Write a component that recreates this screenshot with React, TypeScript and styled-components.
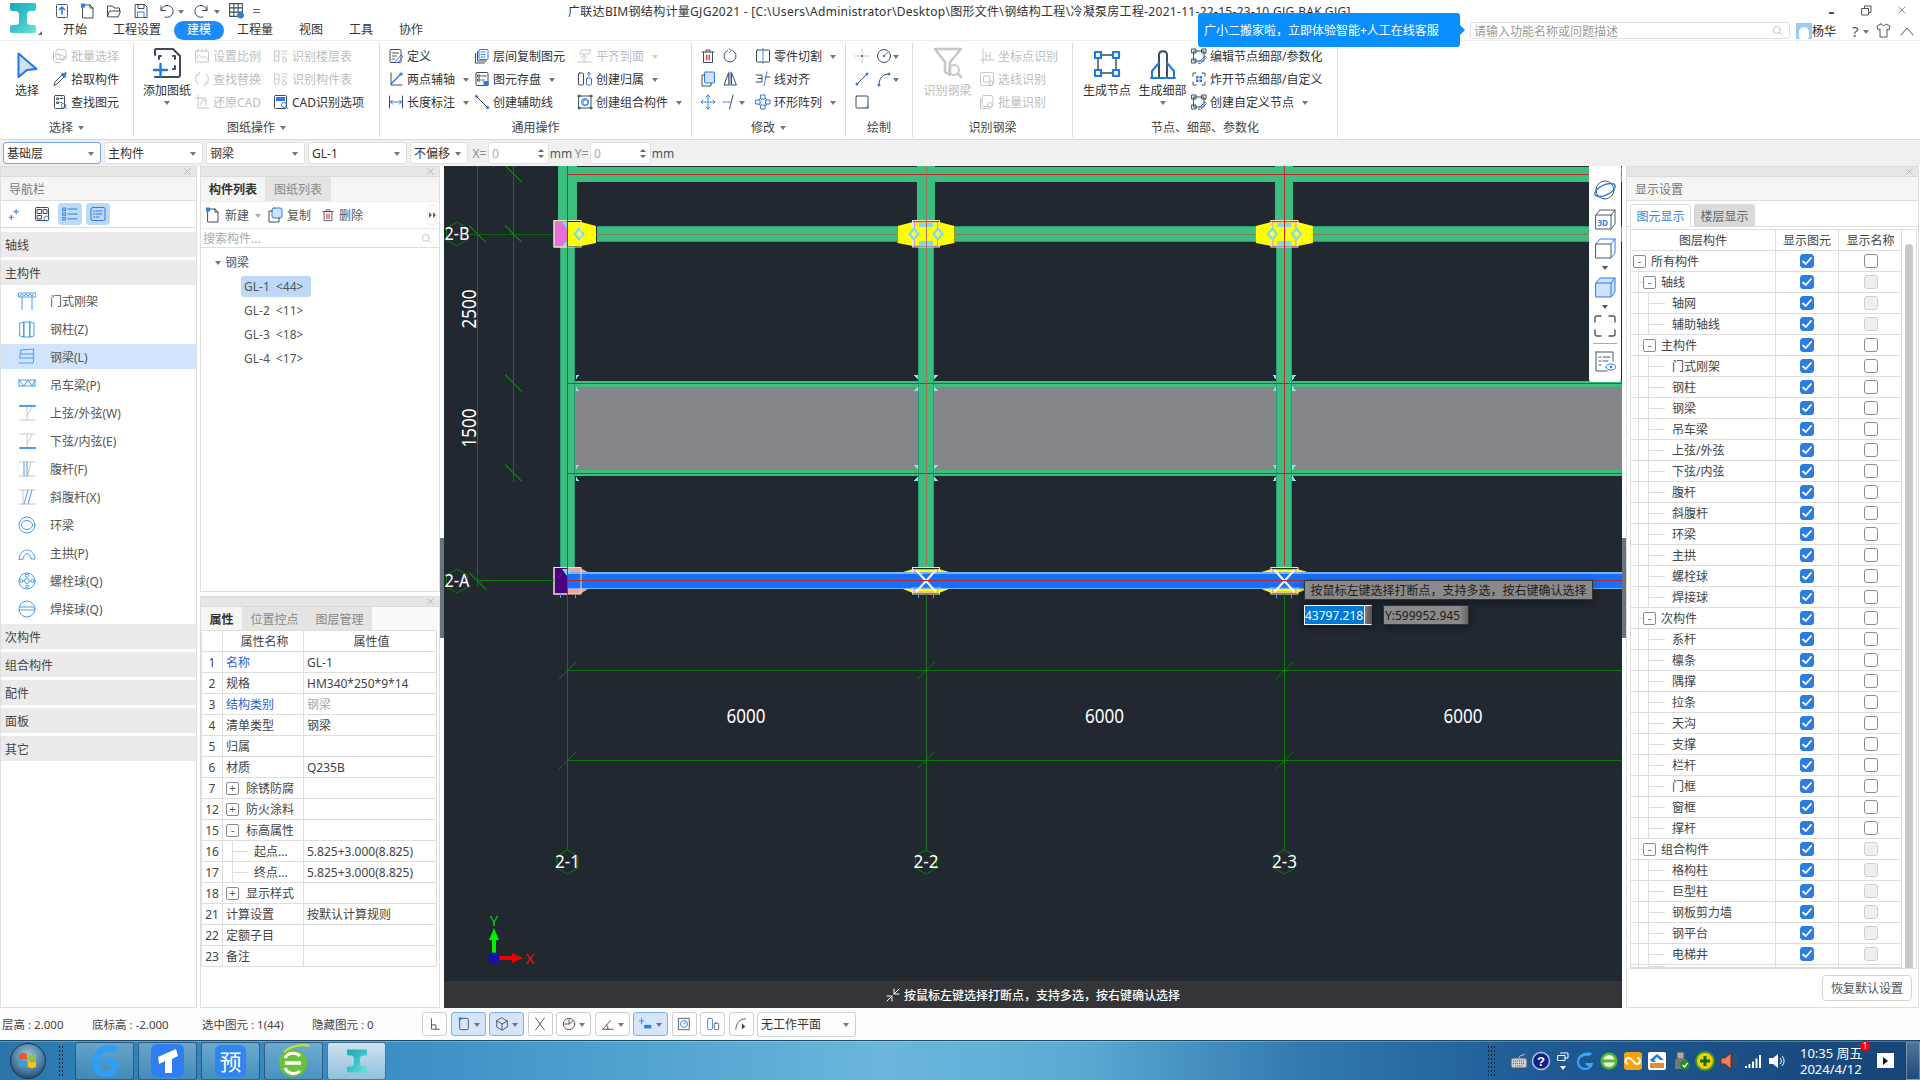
import React from 'react';
import styled, { createGlobalStyle } from 'styled-components';

const Global = createGlobalStyle`
  html, body { margin: 0; padding: 0; width: 1920px; height: 1080px; overflow: hidden; background: #fff; }
  #root { width: 1920px; height: 1080px; }
  * { box-sizing: border-box; }
  body { font-family: "Noto Sans", "Noto Sans CJK SC", sans-serif; font-size: 12px; color: #444; }
`;

/* ---------- icons ---------- */
const Svg = styled.svg<{ $s: number; $c?: string; $a?: string }>`
  width: ${p => p.$s}px; height: ${p => p.$s}px; flex: none; fill: none;
  stroke: ${p => p.$c || '#3f4b5b'}; stroke-width: 1; stroke-linecap: round; stroke-linejoin: round;
  --a: ${p => p.$a || '#2b7ce9'};
  .a { stroke: var(--a); }
  .f { fill: var(--a); stroke: none; }
  .l { fill: #cfe2fa; stroke: var(--a); }
  .r { stroke: #e02020; }
  .n { fill: currentColor; stroke: none; }
`;

const G: Record<string, React.ReactNode> = {
  upload: <><rect x="2.5" y="1.5" width="11" height="13" rx="1" strokeDasharray="2 1" /><path className="a" strokeWidth="1.6" d="M8 11V4M5.5 6.5L8 4l2.5 2.5" /></>,
  newDoc: <><path d="M3 2h7l3 3v10H3zM10 2v3h3" /><rect className="f" x="1" y="0.5" width="4" height="4" /></>,
  open: <path d="M1.5 13.5V3h5l1.5 2h5.5v3M1.5 13.5l2-5.5h11l-2 5.5z" />,
  save: <><path d="M2.5 1.5h9l2.5 2.5v10.500H2.500zM5 1.5v4h6v-4" /><rect className="a" x="5" y="9" width="6" height="5.5" /></>,
  undo: <path d="M3 3v4.5h4.5M3.2 7.5A6 6 0 1 1 7 14" />,
  redo: <path d="M13 3v4.5H8.5M12.8 7.5A6 6 0 1 0 9 14" />,
  gridEye: <><path d="M1.5 1.5h12v12h-12zM1.5 5.5h12M1.5 9.5h12M5.5 1.5v12M9.5 1.5v12" /><circle className="f" cx="12" cy="12.5" r="3" /></>,
  batch: <><rect x="4" y="1.5" width="10" height="10" rx="2" /><path d="M1.5 4v8l2 2.5h5" /><path d="M6 6l4 7 1-3 3-.5z" /></>,
  pick: <><path d="M2 14l1-3 7-7 2 2-7 7z" /><path className="f" d="M9 3l1.5-1.5 1 1 2-1.5 1.500 1.500-1.500 2 1 1L13 7z" /></>,
  docFind: <><rect x="2.5" y="1.5" width="10" height="13" rx="1" /><path d="M5 4h1.5v1.5H5zM8 4.5h3M5 8h1.5v1.5H5zM8 8.5h1.5" /><circle className="a" cx="11.5" cy="11.5" r="2.2" /><path className="a" d="M13 13l1.5 1.5" /></>,
  scale: <><rect x="1.5" y="3" width="13" height="11" rx="1" /><path d="M1.5 11l4-4 3 3 2-2 4 4M4 1v2M8 1v2M12 1v2" /></>,
  swap: <><path d="M3 4a6 6 0 0 0 1 9M13 12a6 6 0 0 0-1-9" /><path d="M5 1v3H2M11 15v-3h3" /></>,
  restore: <><path d="M4 1v13h11M1 4h11v7" /><path d="M6 11l3-6 2 2" /></>,
  tblDots: <><path d="M2 3h4v10H2zM2 8h4M9 3h5M9 6h5M9 9h3" /><circle cx="11.5" cy="12" r="2" /></>,
  cad: <><rect x="1.5" y="1.5" width="12" height="13" rx="1" /><rect className="f" x="3" y="3" width="9" height="4" /><circle className="a" cx="11" cy="11" r="2.5" /><path className="a" d="M13 13l2 2" /></>,
  define: <><rect x="2" y="1.5" width="11" height="13" rx="1" /><path d="M4.5 5h6M4.5 8h4M4.5 11h2" /><path className="a" d="M8 13l5-6 2 1.5-5 6H8z" /></>,
  twoPt: <><path d="M3 2v12h11" /><path className="a" strokeWidth="1.5" d="M3 13L13 3" /><circle className="a" cx="13" cy="3" r="1.2" /></>,
  dim: <><path d="M1.5 2v12M14.5 2v12" /><path className="a" d="M2.5 8h11M4.5 6l-2 2 2 2M11.5 6l2 2-2 2" /></>,
  floor: <><rect className="a" x="5" y="1.5" width="9" height="10" rx="1" /><path className="a" strokeDasharray="1.5 1" d="M7 4h5M7 6.5h5M7 9h5" /><path d="M3.5 3.5v9.500h9M1.500 5.500v9.500h9" /></>,
  elemSave: <><rect x="2" y="1.5" width="12" height="13" rx="1" /><path d="M4 4h2v2H4zM8 5h4M4 8h2v2H4zM8 9h2" /><rect className="f" x="9.5" y="10" width="5" height="5" /></>,
  auxLine: <><path d="M2 2l12 12" /><circle className="a" cx="2.5" cy="2.5" r="1.2" /><circle className="a" cx="13.5" cy="13.5" r="1.2" /></>,
  flush: <path d="M5 2h9l-2 4H3zM1 14h14M7 14V7l-3 3M7 7l3 3" />,
  owner: <><rect x="1.5" y="2" width="5" height="12" rx="1" /><rect className="a" x="9.5" y="7" width="5" height="7" rx="1" /><path className="a" d="M12 5V1.5M10.5 3L12 1.5 13.5 3" /></>,
  combo: <><path d="M2 2h12v12H2z" /><circle cx="2" cy="2" r="1" /><circle cx="14" cy="2" r="1" /><circle cx="2" cy="14" r="1" /><circle cx="14" cy="14" r="1" /><circle className="a" cx="8" cy="8" r="3.5" /><rect className="a" x="6" y="6" width="5" height="5" rx="1" /></>,
  trash: <><path d="M2 4h12M6 4V2h4v2M3.5 4v10.500h9V4" /><path className="r" strokeWidth="1.2" d="M6.8 7v5M9.2 7v5" /></>,
  rotate: <><path d="M10.5 2.5A6 6 0 1 1 5.5 2.5" /><path className="a" d="M7 .8L9.5 2.5 7.5 4.5" /></>,
  cut: <><rect x="1.5" y="2" width="13" height="12" rx="1" /><path className="a" strokeDasharray="2 1.2" d="M8 0.5v15" /></>,
  copyB: <><rect className="l" x="4.5" y="1" width="10" height="11" rx="1" /><path d="M4.5 4H2v11h9v-3" /></>,
  mirror: <><path d="M6.5 2L2 14h4.500zM9.500 2v12H14z" /><path className="a" d="M8 1v14" /></>,
  align: <><path d="M1 4h6v7H1M10 6h5M3 7.5h4" /><path className="a" d="M12 1l-3 14" strokeDasharray="2 1" /></>,
  move: <path className="a" d="M8 1v14M1 8h14M6 3l2-2 2 2M6 13l2 2 2-2M3 6L1 8l2 2M13 6l2 2-2 2" strokeDasharray="2 1" />,
  trim: <><path className="a" strokeDasharray="2.5 1.5" d="M1 8h7" /><path d="M11 1L7.5 15" /></>,
  ring: <><circle cx="8" cy="8" r="4.5" /><rect className="a" fill="#fff" x="6" y="1" width="4" height="4" /><rect className="a" fill="#fff" x="1" y="6" width="4" height="4" /><rect className="a" fill="#fff" x="11" y="6" width="4" height="4" /><rect className="a" fill="#fff" x="6" y="11" width="4" height="4" /></>,
  point: <><path d="M1 8h4.500M10.500 8H15M8 1v4.500M8 10.500V15" /><circle cx="8" cy="8" r="1" className="n" /></>,
  circ: <><circle cx="8" cy="8" r="6.5" /><path className="a" d="M8 8l3.500-3.500" /><circle className="f" cx="8" cy="8" r="1.2" /></>,
  line: <><path d="M3 13L13 3" /><circle className="f" cx="3" cy="13" r="1.5" /><circle className="f" cx="13" cy="3" r="1.5" /></>,
  arc: <><path d="M3 14C3 7 7 3 13 3" /><circle className="f" cx="3" cy="14" r="1.5" /><circle className="f" cx="13" cy="3" r="1.5" /></>,
  rect: <><rect x="2" y="2" width="12" height="12" rx="1" /><circle className="f" cx="13.5" cy="13.5" r="1.3" /></>,
  coord: <path d="M4 1v14M1 12h14M7 4v8M11 4v8M7 8h4" />,
  lineRec: <><rect x="1.5" y="1.5" width="13" height="13" rx="2" /><rect x="5" y="5" width="6" height="6" /><circle cx="12" cy="12" r="2" /></>,
  batchRec: <><rect x="3" y="1.5" width="11" height="11" rx="2" /><path d="M1.5 5v9.500h9" /><circle cx="11" cy="11" r="2.5" /></>,
  editNode: <><path d="M3 3h10v10H3z" /><rect x="1" y="1" width="4" height="4" /><rect x="11" y="1" width="4" height="4" /><rect x="1" y="11" width="4" height="4" /><path className="a" d="M8 14l6-6 1.500 1.500-6 6H8z" /></>,
  explode: <><path d="M2 5V2h3M11 2h3v3M14 11v3h-3M5 14H2v-3" /><rect className="f" x="5" y="5" width="2.5" height="2.5" /><rect className="f" x="8.5" y="5" width="2.5" height="2.5" /><rect className="f" x="5" y="8.5" width="2.5" height="2.5" /><rect className="f" x="8.5" y="8.5" width="2.5" height="2.5" /></>,
  search: <><circle cx="7" cy="7" r="5" /><path d="M11 11l3.500 3.500" /></>,
  x: <path d="M3 3l10 10M13 3L3 13" />,
  copySm: <><rect className="l" x="5" y="1" width="10" height="10" rx="2" /><path d="M5 4H2v11h10v-4" /></>,
  sparkle: <path className="a" strokeWidth="1.3" d="M10 1.5v6M7 4.5h6M4 9v5M1.500 11.500h5" />,
  gridGear: <><rect x="1.5" y="1.5" width="13" height="13" rx="1" /><rect x="3.5" y="3.5" width="4" height="4" /><rect x="9.5" y="3.5" width="3.5" height="4" /><rect x="3.5" y="9.5" width="4" height="3.5" /><circle className="a" cx="12.5" cy="12.5" r="2.5" /></>,
  listDots: <g className="a"><rect x="1" y="2" width="2.5" height="2.5" /><rect x="1" y="6.8" width="2.5" height="2.5" /><rect x="1" y="11.5" width="2.5" height="2.5" /><path d="M6 3h9M6 8h9M6 12.800h9" /></g>,
  form: <g className="a"><rect x="1" y="1.5" width="14" height="13" rx="1.5" /><path d="M3.500 5h1M6 5h6M3.500 8h1M6 8h6M3.500 11h1M6 11h3" /></g>,
  ell: <path d="M4 2v12h9M4 9h5v5" />,
  rectSt: <><rect x="3" y="1.5" width="10" height="13" rx="1.5" /><rect className="f" x="2" y="0.5" width="3" height="3" /></>,
  cubeSt: <path d="M8 1l6 3.500v7L8 15l-6-3.500v-7zM8 8v7M2 4.500L8 8l6-3.500" />,
  xSt: <path d="M3 1l10 14M13 1L3 15" />,
  clock: <><circle cx="8" cy="8" r="6.5" /><path d="M8 3v5H2.500M8 8l4-3" /></>,
  angle: <path d="M2 14h12M2 14L11 4M8 14A6 6 0 0 0 6.500 9" />,
  plusBar: <><path d="M3 1.5v6M0.500 4.500h5" className="a" /><rect className="f" x="6" y="9" width="8" height="4" /></>,
  frame: <><rect x="2" y="1.5" width="12" height="13" /><circle className="a" cx="8" cy="8" r="4" /><path className="a" d="M8 8l2-3" /></>,
  barSt: <><rect className="a" x="2" y="1.5" width="5.5" height="13" rx="1.5" /><rect x="9.5" y="7" width="5" height="7.5" rx="1.5" /></>,
  elbow: <><path d="M2 14C3 6 6 3 13 2" /><path d="M9 14V7l4 4z" className="n" /></>,
};

const Icon = ({ n, s = 16, off, c, a }: { n: string; s?: number; off?: boolean; c?: string; a?: string }) => (
  <Svg viewBox="0 0 16 16" $s={s} $c={off ? '#c6c6c6' : c} $a={off ? '#c6c6c6' : a}>{G[n]}</Svg>
);

const Caret = styled.span<{ $ml?: number; $d?: string }>`
  flex: none; display: inline-block; width: 0; height: 0; margin-left: ${p => p.$ml ?? 5}px; margin-top: 2px;
  border: 3px solid transparent; border-bottom: 0; border-top: 4px solid ${p => p.$d || '#777'};
`;

const LogoGlyph = ({ w = 26, h = 30 }: { w?: number; h?: number }) => (
  <svg viewBox="0 0 26 30" width={w} height={h}>
    <defs>
      <linearGradient id="lg" x1="0" y1="0" x2="1" y2="1">
        <stop offset="0" stopColor="#1fa5b3" /><stop offset="0.5" stopColor="#37c4c8" /><stop offset="1" stopColor="#6fe3d6" />
      </linearGradient>
    </defs>
    <path fill="url(#lg)" d="M1 0h24c1 0 1 1 1 2v4c0 1-1 2-2 2h-3c-3 0-4 2-4 4v7c0 2 1 3 4 3h3c1 0 2 1 2 2v4c0 1-1 2-2 2H2c-1 0-2-1-2-2v-4c0-1 1-2 2-2h3c3 0 4-1 4-3v-7c0-2-1-4-4-4H2C1 8 0 7 0 6V2c0-1 0-2 1-2z" />
  </svg>
);

/* ---------- layout ---------- */
const Page = styled.div`
  width: 1920px; height: 1080px; display: flex; flex-direction: column; background: #fff; position: relative;
`;
const Header = styled.header`
  height: 41px; display: flex; border-bottom: 1px solid #eee; position: relative; flex: none;
`;
const LogoCol = styled.div`
  width: 50px; padding: 3px 0 0 10px; position: relative; flex: none;
`;
const LogoMark = styled.span`
  position: absolute; left: 38px; top: 31px; width: 0; height: 0;
  border-left: 4px solid transparent; border-bottom: 4px solid #666;
`;
const HeaderMain = styled.div`
  flex: 1; display: flex; flex-direction: column; min-width: 0;
`;
const TitleRow = styled.div`
  height: 21px; display: flex; align-items: center; flex: none;
`;
const Quick = styled.div`
  width: 518px; display: flex; align-items: center; padding-left: 4px; flex: none;
`;
const QuickBtn = styled.span<{ $w: number }>`
  width: ${p => p.$w}px; display: flex; align-items: center; flex: none;
`;
const MoreMark = styled.span`
  width: 7px; height: 4px; border-top: 1px solid #666; border-bottom: 1px solid #666; margin-left: 1px;
`;
const Title = styled.div`
  color: #333; white-space: nowrap; font-size: 12px; letter-spacing: .3px;
`;
const WinCtl = styled.div`
  position: absolute; right: 0; top: 2px; display: flex; align-items: center;
`;
const WinBtn = styled.span<{ $w: number }>`
  width: ${p => p.$w}px; display: flex; justify-content: center; align-items: center; height: 16px;
`;
const MinBar = styled.span`
  width: 5px; height: 2px; background: #555; margin-top: 5px;
`;
const TabRow = styled.nav`
  height: 19px; display: flex; align-items: center;
`;
const Tab = styled.span<{ $on?: boolean }>`
  padding: 0 13px; height: 19px; line-height: 18px; border-radius: 10px; font-size: 12px;
  color: ${p => (p.$on ? '#fff' : '#333')}; background: ${p => (p.$on ? '#1a8cff' : 'transparent')};
`;
const HeadRight = styled.div`
  margin-left: auto; display: flex; align-items: center; height: 19px;
`;
const SearchBox = styled.div`
  width: 320px; height: 17px; border: 1px solid #e2e2e2; border-radius: 3px; display: flex; align-items: center;
  justify-content: space-between; padding: 0 6px 0 3px; color: #9a9a9a; font-size: 12px; background: #fff;
`;
const Avatar = styled.span`
  width: 16px; height: 16px; margin-left: 6px; background: #9ccbf8; display: flex; align-items: flex-end; justify-content: center; flex: none;
`;
const AvatarHead = styled.span`
  width: 10px; height: 12px; background: #fff; border-radius: 5px 5px 2px 2px;
`;
const UserName = styled.span`
  color: #222; width: 40px; flex: none;
`;
const HelpMark = styled.span`
  color: #555; font-size: 15px; width: 10px; line-height: 16px; flex: none;
`;
const HeadIcon = styled.span<{ $ml: number; $mr?: number }>`
  margin-left: ${p => p.$ml}px; margin-right: ${p => p.$mr ?? 0}px; display: flex; flex: none;
`;
const Banner = styled.div`
  position: absolute; left: 1198px; top: 13px; width: 262px; height: 34px; background: #0a8fff; color: #fff;
  border-radius: 3px; display: flex; align-items: center; padding-left: 6px; font-size: 12px; white-space: nowrap; z-index: 3;
  &::after {
    content: ''; position: absolute; right: -5px; top: 12px; border-left: 5px solid #0a8fff;
    border-top: 5px solid transparent; border-bottom: 5px solid transparent;
  }
`;

const Ribbon = styled.div`
  height: 99px; display: flex; border-bottom: 1px solid #dadada; flex: none; background: #fff;
`;
const Group = styled.section<{ $w: number }>`
  width: ${p => p.$w}px; height: 94px; margin-top: 2px; border-right: 1px solid #dcdcdc; display: flex; flex-direction: column; flex: none;
`;
const GroupBody = styled.div<{ $pl?: number }>`
  flex: 1; display: flex; padding-left: ${p => p.$pl ?? 0}px; padding-top: 1px; min-height: 0;
`;
const GroupLabel = styled.div`
  height: 17px; display: flex; align-items: center; justify-content: center; color: #444; font-size: 12px; margin-bottom: 2px;
`;
const Big = styled.div<{ $w: number; $off?: boolean }>`
  width: ${p => p.$w}px; display: flex; flex-direction: column; align-items: center; flex: none;
  color: ${p => (p.$off ? '#bcbcbc' : '#333')}; white-space: nowrap;
`;
const BigIcon = styled.div`
  height: 35px; display: flex; align-items: flex-end; justify-content: center; width: 100%;
`;
const BigText = styled.div`
  margin-top: 4px; line-height: 16px; font-size: 12px;
`;
const Col = styled.div<{ $w?: number }>`
  width: ${p => (p.$w ? `${p.$w}px` : 'auto')}; display: flex; flex-direction: column; flex: none;
`;
const Row = styled.div<{ $off?: boolean; $gap?: number }>`
  height: 23px; display: flex; align-items: center; gap: ${p => p.$gap ?? 3}px; white-space: nowrap;
  color: ${p => (p.$off ? '#bdbdbd' : '#333')}; font-size: 12px;
`;

const Item = ({ i, t, off, caret }: { i: string; t: string; off?: boolean; caret?: boolean }) => (
  <Row $off={off}><Icon n={i} off={off} /><span>{t}</span>{caret && <Caret $d={off ? '#ccc' : '#777'} />}</Row>
);

const OptionBar = styled.div`
  height: 26px; background: #f0f0f0; display: flex; align-items: center; gap: 3px; padding-left: 3px; flex: none;
`;
const Select = styled.div<{ $w: number; $on?: boolean }>`
  width: ${p => p.$w}px; height: 22px; background: #fff; border: 1px solid ${p => (p.$on ? '#7aa7e6' : '#e0e0e0')}; border-radius: 3px;
  display: flex; align-items: center; justify-content: space-between; padding: 0 6px 0 3px; color: #333;
`;
const SpinGroup = styled.div`
  display: flex; align-items: center;
`;
const OptLabel = styled.span<{ $dim?: boolean; $w: number }>`
  width: ${p => p.$w}px; flex: none; color: ${p => (p.$dim ? '#8a8a8a' : '#555')}; white-space: nowrap; text-align: center;
`;
const Spin = styled.div`
  width: 61px; height: 22px; background: #fff; border: 1px solid #e0e0e0; border-radius: 3px; display: flex; align-items: center;
  justify-content: space-between; padding: 0 4px 0 3px; color: #aaa; flex: none;
`;
const SpinArrows = styled.span`
  display: flex; flex-direction: column; gap: 3px;
`;
const ArrowUp = styled.span`
  border: 3px solid transparent; border-top: 0; border-bottom: 3px solid #666; width: 0; height: 0;
`;
const ArrowDown = styled.span`
  border: 3px solid transparent; border-bottom: 0; border-top: 3px solid #666; width: 0; height: 0;
`;

const Main = styled.main`
  height: 842px; display: flex; position: relative; flex: none;
`;
const Panel = styled.section<{ $w?: number; $ml?: number; $h?: number }>`
  width: ${p => (p.$w ? `${p.$w}px` : '100%')}; margin-left: ${p => p.$ml ?? 0}px;
  ${p => (p.$h ? `height:${p.$h}px;` : '')}
  flex: ${p => (p.$h || p.$w ? 'none' : '1')};
  border: 1px solid #dedede; display: flex; flex-direction: column; background: #fff; min-height: 0;
`;
const Grip = styled.div`
  height: 10px; background: #e6e6e6; border-bottom: 1px solid #dadada; display: flex; justify-content: flex-end; align-items: center; padding-right: 4px; flex: none;
`;
const PanelHead = styled.div`
  height: 24px; background: #f5f5f5; border-bottom: 1px solid #dedede; display: flex; align-items: center; padding-left: 8px; color: #777; flex: none;
`;
const NavTools = styled.div`
  height: 27px; display: flex; align-items: center; gap: 4px; padding-left: 1px; border-bottom: 1px solid #dedede; flex: none;
`;
const NavTool = styled.span<{ $on?: boolean }>`
  width: 24px; height: 22px; border-radius: 4px; display: flex; align-items: center; justify-content: center;
  background: ${p => (p.$on ? '#bcd9f5' : 'transparent')};
`;
const NavList = styled.div`
  padding-top: 4px; display: flex; flex-direction: column; gap: 3px;
`;
const NavSection = styled.div`
  height: 25px; background: #ebebeb; padding-left: 4px; display: flex; align-items: center; color: #444; font-size: 12px; flex: none;
`;
const NavItem = styled.div<{ $on?: boolean }>`
  height: 25px; display: flex; align-items: center; gap: 14px; padding-left: 17px; color: #555; flex: none;
  background: ${p => (p.$on ? '#d0e5fd' : 'transparent')};
`;

const Middle = styled.div`
  width: 240px; margin-left: 3px; display: flex; flex-direction: column; gap: 4px; flex: none;
`;
const Tabs = styled.div<{ $bg?: string; $h?: number }>`
  height: ${p => p.$h ?? 23}px; display: flex; background: ${p => p.$bg || '#f5f5f5'}; flex: none;
`;
const FlatTab = styled.div<{ $on?: boolean; $w: number }>`
  width: ${p => p.$w}px; display: flex; align-items: center; justify-content: center; font-weight: ${p => (p.$on ? 700 : 400)};
  color: ${p => (p.$on ? '#333' : '#888')}; background: ${p => (p.$on ? '#f5f5f5' : '#e4e4e4')}; font-size: 12px;
`;
const CompTools = styled.div`
  height: 27px; display: flex; align-items: center; padding-left: 4px; flex: none; border-top: 1px solid #eee;
`;
const CompBtn = styled.span<{ $mr?: number; $ml?: number }>`
  display: flex; align-items: center; gap: 4px; margin-right: ${p => p.$mr ?? 10}px; margin-left: ${p => p.$ml ?? 0}px; color: #555;
`;
const MoreBtn = styled.span`
  margin-left: auto; margin-right: 2px; width: 10px; height: 20px; border-radius: 3px; border: 1px solid #f0f0f0;
  display: flex; align-items: center; justify-content: center; gap: 1px;
`;
const MiniTri = styled.span`
  border-left: 3px solid #666; border-top: 3px solid transparent; border-bottom: 3px solid transparent; width: 0; height: 0;
`;
const CompSearch = styled.div`
  height: 20px; display: flex; align-items: center; justify-content: space-between; padding: 0 7px 0 2px; color: #aaa;
  border-top: 1px solid #e8e8e8; border-bottom: 1px solid #dedede; flex: none;
`;
const TreeRoot = styled.div`
  height: 24px; margin-top: 2px; padding-left: 14px; display: flex; align-items: center; gap: 4px; color: #555; flex: none;
`;
const TreeLeaf = styled.div`
  height: 24px; padding-left: 40px; display: flex; align-items: center; flex: none;
`;
const LeafPill = styled.span<{ $on?: boolean }>`
  width: 70px; height: 21px; padding-left: 3px; display: flex; align-items: center; border-radius: 3px; color: #555; white-space: pre;
  background: ${p => (p.$on ? '#bcd9f5' : 'transparent')};
`;

const PropGrid = styled.div`
  width: 236px; border-top: 1px solid #dedede; border-left: 1px solid #dedede; flex: none;
`;
const PropRow = styled.div`
  height: 21px; display: grid; grid-template-columns: 21px 81px 133px; border-bottom: 1px solid #dedede;
`;
const PropCell = styled.div<{ $c?: string; $center?: boolean; $pl?: number; $tree?: boolean }>`
  border-right: 1px solid #dedede; display: flex; align-items: center; white-space: nowrap; overflow: hidden;
  padding-left: ${p => p.$pl ?? 3}px; justify-content: ${p => (p.$center ? 'center' : 'flex-start')};
  color: ${p => p.$c || '#444'}; gap: 7px;
  ${p => p.$tree ? `background-image: linear-gradient(#ddd,#ddd), linear-gradient(#ddd,#ddd);
    background-size: 1px 100%, 16px 1px; background-position: 9px 0, 9px 50%; background-repeat: no-repeat;` : ''}
`;
const NumCell = styled(PropCell)`
  padding: 0; justify-content: center;
`;
const Box = styled.span`
  width: 13px; height: 13px; flex: none; border: 1px solid #8a8a8a; border-radius: 2px; position: relative; background: #fff;
  display: inline-flex; align-items: center; justify-content: center; color: #555; font-size: 11px; line-height: 11px; font-family: "Liberation Sans", sans-serif;
`;

const CanvasWrap = styled.div`
  width: 1178px; margin-left: 4px; display: flex; flex-direction: column; position: relative; flex: none; background: #212830;
`;
const Prompt = styled.div`
  height: 27px; background: #333538; color: #fff; display: flex; align-items: center; padding-left: 442px; gap: 4px; font-size: 12px; font-weight: 500; flex: none;
`;
const ViewTools = styled.div`
  position: absolute; right: 1px; top: 0; width: 32px; height: 216px; background: #fff; border-radius: 0 0 3px 3px;
  padding-top: 9px; display: flex; flex-direction: column; align-items: center;
`;
const ViewBtn = styled.span`
  height: 29px; display: flex; align-items: center; justify-content: center; flex: none;
`;
const ViewCaret = styled.span`
  height: 10px; display: flex; align-items: center; flex: none;
`;
const ViewRule = styled.span`
  width: 24px; height: 1px; background: #aaa; margin: 3px 0 2px; flex: none;
`;
const CursorHint = styled.div`
  position: absolute; left: 860px; top: 414px; display: flex; flex-direction: column; gap: 5px; align-items: flex-start;
`;
const HintText = styled.div`
  width: 289px; height: 20px; background: #8a8a8a; border: 1px solid #333; color: #1c1c1c; display: flex; align-items: center; justify-content: center; white-space: nowrap;
  box-shadow: 0 2px 8px rgba(0,0,0,.4);
`;
const Coords = styled.div`
  display: flex; gap: 11px;
`;
const XInput = styled.div`
  width: 68px; height: 20px; background: linear-gradient(90deg,#8a8a8a 88%,#555); border: 1px solid #fff; border-right-color: #555; display: flex; align-items: stretch;
  box-shadow: 0 2px 8px rgba(0,0,0,.5);
`;
const XSel = styled.span`
  background: #0078d7; color: #fff; width: 60px; display: flex; align-items: center; border-right: 1px solid #fff; font-size: 12px;
`;
const YInput = styled.div`
  width: 86px; height: 20px; background: linear-gradient(90deg,#8a8a8a 90%,#666); border: 1px solid #333; color: #1c1c1c; display: flex; align-items: center; padding-left: 1px;
  box-shadow: 0 2px 8px rgba(0,0,0,.5);
`;
const Sash = styled.span<{ $l: number }>`
  position: absolute; left: ${p => p.$l}px; top: 372px; width: 4px; height: 100px; background: #6b747e;
`;

const DispTabs = styled.div`
  height: 26px; padding: 3px 0 0 3px; display: flex; gap: 3px; border-bottom: 1px solid #dedede; flex: none;
`;
const DispTab = styled.div<{ $on?: boolean }>`
  width: 61px; height: 23px; border-radius: 3px 3px 0 0; display: flex; align-items: center; justify-content: center;
  color: ${p => (p.$on ? '#3a84e0' : '#666')}; background: ${p => (p.$on ? '#fff' : '#dadada')};
  border: ${p => (p.$on ? '1px solid #dedede' : '0')}; border-bottom: 0; margin-bottom: ${p => (p.$on ? -1 : 0)}px;
`;
const DispBody = styled.div`
  margin: 2px 0 0 3px; width: 287px; border: 1px solid #dedede; display: flex; flex: none;
`;
const DispGrid = styled.div`
  width: 271px; border-right: 1px solid #dedede;
`;
const DispRow = styled.div<{ $h?: number }>`
  height: ${p => p.$h ?? 21}px; display: grid; grid-template-columns: 145px 63px 63px; border-bottom: 1px solid #dedede;
`;
const DispCell = styled.div<{ $center?: boolean }>`
  border-right: 1px solid #dedede; display: flex; align-items: center; justify-content: ${p => (p.$center ? 'center' : 'flex-start')}; overflow: hidden;
  &:last-child { border-right: 0; }
`;
const TreeCell = styled.div<{ $lv: number }>`
  border-right: 1px solid #dedede; display: flex; align-items: center; gap: 5px; white-space: nowrap; color: #444;
  padding-left: ${p => (p.$lv === 0 ? 2 : p.$lv === 1 ? 12 : 41)}px;
  ${p => p.$lv === 1 ? `background-image: linear-gradient(#ddd,#ddd), linear-gradient(#ddd,#ddd);
    background-size: 1px 100%, 5px 1px; background-position: 7px 0, 7px 50%; background-repeat: no-repeat;` : ''}
  ${p => p.$lv === 2 ? `background-image: linear-gradient(#ddd,#ddd), linear-gradient(#ddd,#ddd), linear-gradient(#ddd,#ddd);
    background-size: 1px 100%, 1px 100%, 17px 1px; background-position: 7px 0, 17px 0, 17px 50%; background-repeat: no-repeat;` : ''}
`;
const Check = styled.span<{ $st: 'on' | 'off' | 'dis' }>`
  width: 14px; height: 14px; border-radius: 3px; display: flex; align-items: center; justify-content: center; flex: none;
  background: ${p => (p.$st === 'on' ? '#2d7de0' : p.$st === 'dis' ? '#efefef' : '#fff')};
  border: 1px solid ${p => (p.$st === 'on' ? '#2d7de0' : p.$st === 'dis' ? '#cfcfcf' : '#8c8c8c')};
`;
const ScrollTrack = styled.div`
  width: 14px; padding: 14px 0 0 3px;
`;
const ScrollThumb = styled.div`
  width: 8px; height: 724px; background: #c8c8c8; border-radius: 4px 4px 0 0;
`;
const DispFoot = styled.div`
  display: flex; justify-content: flex-end; padding: 6px 6px 0 0; flex: none;
`;
const ResetBtn = styled.div`
  width: 90px; height: 26px; border: 1px solid #d4d4d4; border-radius: 4px; display: flex; align-items: center; justify-content: center; color: #555;
`;

const StatusBar = styled.footer`
  height: 32px; background: #fdfdfd; display: flex; align-items: center; flex: none; padding-left: 2px;
`;
const Stat = styled.span<{ $w: number }>`
  width: ${p => p.$w}px; color: #444; white-space: pre; flex: none; font-size: 11.5px;
`;
const StatTools = styled.div`
  display: flex; gap: 3.5px; align-items: center;
`;
const StatBtn = styled.span<{ $w?: number; $on?: boolean }>`
  width: ${p => p.$w ?? 25}px; height: 24px; border-radius: 3px; display: flex; align-items: center; justify-content: center; flex: none;
  border: 1px solid ${p => (p.$on ? '#79aef0' : '#cfcfcf')}; background: ${p => (p.$on ? '#d5e6fb' : '#fff')};
`;
const StatSelect = styled.span`
  width: 99px; height: 25px; border: 1px solid #cfcfcf; border-radius: 3px; display: flex; align-items: center; justify-content: space-between; padding: 0 6px 0 3px; color: #333;
`;

const Taskbar = styled.footer`
  height: 40px; flex: none; display: flex; align-items: center; position: relative;
  border-top: 1px solid #1a4a6c;
  background: linear-gradient(90deg,#2a74aa 0%,#2f80b5 5%,#3d91c5 22%,#6ab6dc 46%,#5caad4 56%,#3079ae 68%,#1f5b96 80%,#174476 100%);
  box-shadow: inset 0 1px 0 rgba(255,255,255,.25);
`;
const Orb = styled.div`
  width: 58px; padding-left: 10px; flex: none; display: flex;
`;
const DotGrip = styled.span`
  width: 6px; height: 32px; margin-right: 11px; flex: none;
  background-image: radial-gradient(#123 45%, transparent 50%); background-size: 3px 4px;
`;
const TaskBtn = styled.div<{ $on?: boolean }>`
  width: 59px; height: 38px; margin-right: 4px; border: 1px solid rgba(20,50,80,.6); border-radius: 3px; display: flex; align-items: center; justify-content: center; flex: none;
  background: ${p => (p.$on ? 'linear-gradient(rgba(255,255,255,.75),rgba(255,255,255,.45))' : 'linear-gradient(rgba(255,255,255,.28),rgba(255,255,255,.08))')};
`;
const PreTile = styled.span`
  width: 31px; height: 32px; border-radius: 6px; background: #2f86f0; color: #fff; font-size: 22px; display: flex; align-items: center; justify-content: center; line-height: 1;
`;
const Tray = styled.div`
  margin-left: auto; display: flex; align-items: center; height: 100%;
`;
const TrayCell = styled.span<{ $w: number }>`
  width: ${p => p.$w}px; display: flex; flex-direction: column; align-items: center; justify-content: center; flex: none; color: #fff;
`;
const Clock = styled.div`
  width: 62px; color: #fff; font-size: 13px; line-height: 16px; white-space: nowrap; position: relative; flex: none; margin-left: 12px;
`;
const Badge = styled.span`
  position: absolute; left: 60px; top: -4px; width: 10px; height: 10px; border-radius: 50%; background: #f00; color: #fff; font-size: 8px; line-height: 10px; text-align: center;
`;
const FlagBtn = styled.span`
  width: 17px; height: 15px; background: #fff; display: flex; align-items: center; justify-content: center; margin-left: 15px; flex: none;
`;
const ShowDesk = styled.span`
  width: 14px; height: 38px; margin-left: 12px; border: 1px solid rgba(255,255,255,.3); background: linear-gradient(rgba(255,255,255,.25),rgba(255,255,255,.03)); flex: none;
`;
const TrayGrip = styled(DotGrip)`
  width: 9px; margin-right: 12px;
`;
const DeskArrow = styled.span`
  border-left: 5px solid #111; border-top: 4px solid transparent; border-bottom: 4px solid transparent; width: 0; height: 0;
`;
const SmallDown = styled.span`
  border: 3px solid transparent; border-bottom: 0; border-top: 4px solid #fff; width: 0; height: 0; margin-top: 4px;
`;

/* ---------- drawings ---------- */
const GREEN = '#3cbf7e', EDGE = '#2c9a78', AX = '#0a7a0a', RED = '#c0252a', LINEB = '#a0735c';
const XS = [567.5, 926, 1284.4];

const Tick = ({ x, y, dir = 1 }: { x: number; y: number; dir?: 1 | -1 }) => (
  <line x1={x - 8.5} y1={y - 8.5 * dir} x2={x + 8.5} y2={y + 8.5 * dir} stroke={AX} strokeWidth={1} />
);
const Hex = ({ x, y, t }: { x: number; y: number; t: string }) => (
  <g>
    <polygon points={`${x},${y - 12} ${x + 10.5},${y - 6} ${x + 10.5},${y + 6} ${x},${y + 12} ${x - 10.5},${y + 6} ${x - 10.5},${y - 6}`} fill="none" stroke={AX} />
    <text x={x} y={y + 6} fill="#fff" fontSize={18} textLength={25} lengthAdjust="spacingAndGlyphs" textAnchor="middle" fontFamily="Noto Sans">{t}</text>
  </g>
);
const Diamond = ({ x, y }: { x: number; y: number }) => (
  <g>
    <polygon points={`${x - 6},${y} ${x},${y - 7} ${x + 6},${y} ${x},${y + 7}`} fill="#7fdce6" />
    <polygon points={`${x - 3},${y} ${x},${y - 3.5} ${x + 3},${y} ${x},${y + 3.5}`} fill="#ffff40" />
  </g>
);
const Tri = ({ x, y, up, left }: { x: number; y: number; up?: boolean; left?: boolean }) => {
  const dx = left ? -4 : 4; const dy = up ? -5 : 5;
  return <polygon points={`${x},${y} ${x + dx},${y + dy} ${x},${y + dy}`} fill="#7fe8e0" />;
};

const Scene = () => (
  <svg width="1178" height="815" viewBox="444 166 1178 815" style={{ display: 'block', flex: 'none' }} shapeRendering="crispEdges">
    <rect x="444" y="166" width="1178" height="815" fill="#212830" />
    <rect x="575" y="386.3" width="1047" height="84" fill="#84868a" />
    <rect x="575" y="380.5" width="1047" height="6" fill={GREEN} />
    <rect x="575" y="470.3" width="1047" height="5.7" fill={GREEN} />
    <rect x="558" y="166" width="1064" height="16" fill={GREEN} />
    <rect x="444" y="166" width="1178" height="1" fill="#2a2f33" />
    {[[597, 897], [955, 1256], [1313, 1622]].map(([a, b]) => (
      <g key={a}>
        <rect x={a} y="226" width={b - a} height="16" fill={GREEN} />
        <rect x={a} y="226" width={b - a} height="1" fill={EDGE} />
        <rect x={a} y="241" width={b - a} height="1" fill={EDGE} />
      </g>
    ))}
    {XS.map(x => (
      <g key={x}>
        <rect x={x - 9.5} y="166" width="18.5" height="54" fill={GREEN} />
        <rect x={x - 8} y="247" width="15.5" height="320" fill={GREEN} />
        <rect x={x - 8} y="247" width="1" height="320" fill={EDGE} />
        <rect x={x + 6.5} y="247" width="1" height="320" fill={EDGE} />
      </g>
    ))}
    <rect x="567" y="174" width="1055" height="1" fill={RED} />
    <rect x="567" y="383" width="1055" height="1.3" fill={RED} />
    <rect x="567" y="473" width="1055" height="1.3" fill={RED} />
    <rect x="477" y="166" width="1" height="420" fill={AX} />
    <rect x="513" y="166" width="1" height="316" fill={AX} />
    <rect x="478" y="233.5" width="1144" height="1.5" fill="#8a7a5c" />
    <rect x="470" y="233.5" width="84" height="1.5" fill="#0a640a" />
    <Tick x={513.5} y={174} /><Tick x={513.5} y={234} /><Tick x={513.5} y={383} /><Tick x={513.5} y={473} />
    <Tick x={477.5} y={234} /><Tick x={477.5} y={581} />
    {XS.map(x => (
      <g key={x}>
        {[380, 470].map(y => (
          <g key={y}>
            <Tri x={x + 8} y={y} up /><Tri x={x + 8} y={y + 6} />
            {x > 600 && <><Tri x={x - 8} y={y} up left /><Tri x={x - 8} y={y + 6} left /></>}
          </g>
        ))}
      </g>
    ))}
    <rect x="567" y="572" width="1055" height="17" fill="#7db0f2" />
    <rect x="567" y="574" width="1055" height="13.5" fill="#156fff" />
    <g shapeRendering="geometricPrecision">
      <polygon points="567.5,222 581,222 596,226 596,243 581,246 567.5,246" fill="#ffff00" />
      <rect x="554" y="220.5" width="13.5" height="26.5" fill="#e86ed8" stroke="#eee6c8" />
      <Diamond x={579} y={234} />
      <polygon points="562,222 567,222 567,229" fill="#7fdce6" /><polygon points="562,246 567,246 567,240" fill="#7fdce6" />
      <rect x="554" y="220.5" width="27" height="26.5" fill="none" stroke="#eee6c8" />
      {XS.slice(1).map(x => (
        <g key={x}>
          <polygon points={`${x - 28.5},226 ${x - 13},222 ${x + 13},222 ${x + 28.5},226 ${x + 28.5},243 ${x + 13},246 ${x - 13},246 ${x - 28.5},243`} fill="#ffff00" />
          <rect x={x - 13.5} y="220.5" width="27" height="26.5" fill="none" stroke="#eee6c8" />
          <rect x={x - 11.5} y="222" width="23" height="24" fill="none" stroke="#e08ad8" />
          <rect x={x - 7} y="223" width="14" height="4" fill="#7fdce6" /><rect x={x - 7} y="241" width="14" height="4" fill="#7fdce6" />
          <Diamond x={x - 12} y={234} /><Diamond x={x + 12} y={234} />
        </g>
      ))}
      <polygon points="567.5,572 588,572 580,568 567.5,568" fill="#f2a0a0" />
      <polygon points="567.5,589 588,589 580,594 567.5,594" fill="#f2a0a0" />
      <rect x="554" y="567.5" width="13.5" height="26.5" fill="#4b0082" stroke="#eee6c8" />
      <rect x="554" y="567.5" width="27" height="26.5" fill="none" stroke="#eee6c8" />
      <polygon points="562,569 573,569 567,576" fill="#7fdce6" />
      {XS.slice(1).map(x => (
        <g key={x}>
          <polygon points={`${x - 23},572 ${x - 13},569 ${x + 13},569 ${x + 23},572`} fill="#ffff00" />
          <polygon points={`${x - 23},589 ${x - 13},593 ${x + 13},593 ${x + 23},589`} fill="#ffff00" />
          <rect x={x - 13.5} y="567.5" width="27" height="26.5" fill="none" stroke="#eee6c8" />
          <rect x={x - 11.5} y="569.5" width="23" height="22.5" fill="none" stroke="#e08ad8" />
          <rect x={x - 15} y="572.5" width="30" height="1.5" fill="#7db0f2" />
          <rect x={x - 15} y="574" width="30" height="13.5" fill="#156fff" />
          <rect x={x - 15} y="587.5" width="30" height="1.5" fill="#7db0f2" />
          <path d={`M${x - 10},570 L${x + 10},592 M${x + 10},570 L${x - 10},592`} stroke="#fff" strokeWidth="2" />
        </g>
      ))}
    </g>
    {XS.map(x => (
      <g key={x}>
        <rect x={x - 8} y="594" width="1" height="4" fill="#4aa0d8" />
        <rect x={x + 7} y="594" width="1" height="4" fill="#4aa0d8" />
      </g>
    ))}
    <rect x="567" y="166" width="1" height="684" fill={RED} />
    <rect x="925.5" y="166" width="1.2" height="400" fill={LINEB} />
    <rect x="1284" y="166" width="1" height="400" fill={RED} />
    <rect x="567" y="580" width="1055" height="1.2" fill={RED} />
    <rect x="478" y="580" width="76" height="1" fill={AX} />
    <rect x="567" y="594" width="1" height="256" fill={AX} />
    <rect x="925.5" y="594" width="1.5" height="256" fill="#2a6a2a" />
    <rect x="1284" y="594" width="1" height="256" fill={AX} />
    <rect x="567" y="670" width="1055" height="1" fill={AX} />
    <rect x="567" y="760" width="1055" height="1" fill={AX} />
    <g shapeRendering="geometricPrecision">
      {XS.map(x => (
        <g key={x}>
          <Tick x={x} y={670.5} dir={-1} /><Tick x={x} y={760.5} dir={-1} />
        </g>
      ))}
      <Hex x={457} y={234} t="2-B" /><Hex x={457} y={581} t="2-A" />
      <Hex x={567.5} y={862} t="2-1" /><Hex x={926} y={862} t="2-2" /><Hex x={1284.4} y={862} t="2-3" />
      {[746, 1104.5, 1463].map(x => (
        <text key={x} x={x} y={722.5} fill="#fff" fontSize={19} textLength={39} lengthAdjust="spacingAndGlyphs" textAnchor="middle" fontFamily="Noto Sans">6000</text>
      ))}
      <text transform="translate(475.5,309) rotate(-90)" fill="#fff" fontSize={19} textLength={39} lengthAdjust="spacingAndGlyphs" textAnchor="middle" fontFamily="Noto Sans">2500</text>
      <text transform="translate(475.5,428) rotate(-90)" fill="#fff" fontSize={19} textLength={39} lengthAdjust="spacingAndGlyphs" textAnchor="middle" fontFamily="Noto Sans">1500</text>
      <path d="M494 958V938" stroke="#00f000" strokeWidth="4" />
      <polygon points="494,928 489,940 499,940" fill="#00f000" />
      <path d="M494 958H513" stroke="#f00000" strokeWidth="4" />
      <polygon points="523,958 512,953 512,963" fill="#f00000" />
      <circle cx="494" cy="958" r="5.5" fill="#1010b8" />
      <text x="494" y="926" fill="#10c810" fontSize={15} textAnchor="middle" fontFamily="Noto Sans">Y</text>
      <text x="530" y="963.5" fill="#f01010" fontSize={15} textAnchor="middle" fontFamily="Noto Sans">X</text>
    </g>
  </svg>
);

const IconStroke = styled.svg`
  display: block; flex: none; fill: none; stroke-linecap: round; stroke-linejoin: round;
`;
const BigSelect = () => (
  <IconStroke width="21" height="27" viewBox="0 0 21 27"><path d="M1.5 1.5V25L10 18l9.500-1z" fill="#cfe2fa" stroke="#1e78e0" strokeWidth="2" /></IconStroke>
);
const BigAdd = () => (
  <IconStroke width="30" height="32" viewBox="0 0 30 32">
    <path d="M4 2h17l7 7v19a2 2 0 0 1-2 2H3" stroke="#3f4b5b" strokeWidth="2" />
    <path d="M3 2.5V8M9 9H7v3M21 9h2v3M21 22h2v-3" stroke="#3f4b5b" strokeWidth="2" />
    <path d="M2 23h13M8.5 17v13" stroke="#1e78e0" strokeWidth="2.4" />
  </IconStroke>
);
const BigBeam = () => (
  <IconStroke width="32" height="32" viewBox="0 0 30 32" stroke="#c8c8c8">
    <path d="M2 2h26L17 15v13l-5-3V15z" strokeWidth="2.5" /><circle cx="21" cy="23" r="5" strokeWidth="2" /><path d="M25 27l3 3" strokeWidth="2.5" />
  </IconStroke>
);
const BigNode = () => (
  <IconStroke width="30" height="30" viewBox="0 0 30 30">
    <path d="M6 6h18v18H6z" stroke="#3f4b5b" strokeWidth="1.5" />
    {[[3, 3], [21, 3], [3, 21], [21, 21]].map(([x, y]) => (
      <rect key={`${x}${y}`} x={x} y={y} width="6" height="6" fill="#fff" stroke="#1e78e0" strokeWidth="2.2" />
    ))}
  </IconStroke>
);
const BigDetail = () => (
  <IconStroke width="28" height="30" viewBox="0 0 28 30">
    <path d="M10 29V6c0-5 8-5 8 0v23" stroke="#3f4b5b" strokeWidth="2" />
    <path d="M10 14L3 22v6M18 14l7 8v6M2 29h24" stroke="#1e78e0" strokeWidth="2" />
  </IconStroke>
);

const Nav = ({ k }: { k: string }) => {
  const B = '#4a9cf0', C = '#c8c8c8';
  const m: Record<string, React.ReactNode> = {
    portal: <><path d="M1 1h17v4H1z" stroke={B} /><path d="M2 4l2-2 2 2 2-2 2 2 2-2 2 2 2-2" stroke={B} /><path d="M4 5v13M14 5v13" stroke={B} /></>,
    col: <path d="M2 3l4-1v15l-4-1zM6 2h6v15H6zM12 2l4 1v13l-4 1z" stroke={B} />,
    beam: <><path d="M3 2l13-1-1 5H3zM2 10v-4M16 6l-1 4" stroke={B} /><path d="M2 10h13M1 15h14l1-5" stroke={B} /></>,
    crane: <path d="M1 4h16M1 10h16M1 4v6M17 4v6M1 4l5 6 4-6 4 6 3-6" stroke={B} />,
    top: <><path d="M2 2h15" stroke={B} strokeWidth="2" /><path d="M2 16h15M9 3v12M14 3L9 12" stroke={C} /></>,
    bot: <><path d="M2 2h15M9 3v12M14 3L9 12" stroke={C} /><path d="M2 16h15" stroke={B} strokeWidth="2" /></>,
    web: <><path d="M1 2h16M1 16h16M13 2L10 15" stroke={C} /><path d="M6 2v14M9 2v14" stroke={B} /></>,
    diag: <><path d="M1 2h16M1 16h16M5 2v14" stroke={C} /><path d="M10 2L6 16M14 2l-4 14" stroke={B} /></>,
    ring: <><ellipse cx="9" cy="9" rx="8" ry="8" stroke={B} /><ellipse cx="9" cy="9" rx="5.5" ry="4.5" stroke={B} /></>,
    arch: <path d="M1 15C2 3 16 3 17 15h-4C12 8 6 8 5 15z" stroke={B} />,
    bolt: <><circle cx="9" cy="9" r="8" stroke={B} /><circle cx="9" cy="9" r="2.5" stroke={B} /><circle cx="9" cy="3.5" r="1.5" stroke={B} /><circle cx="9" cy="14.5" r="1.5" stroke={B} /><circle cx="3.5" cy="9" r="1.5" stroke={B} /><circle cx="14.5" cy="9" r="1.5" stroke={B} /></>,
    weld: <><circle cx="9" cy="9" r="8" stroke={B} /><path d="M1.5 7h15M1.5 10h15" stroke={B} /></>,
  };
  return <IconStroke width="18" height="18" viewBox="0 0 18 18">{m[k]}</IconStroke>;
};

const ViewIcon = ({ k }: { k: string }) => {
  const D = '#4c5866', B = '#2b7ce9';
  const m: Record<string, React.ReactNode> = {
    orbit: <><circle cx="11" cy="11" r="9" stroke={D} /><ellipse cx="11" cy="11" rx="11" ry="5" transform="rotate(-25 11 11)" stroke={B} strokeWidth="1.4" /></>,
    d3: <><path d="M2 7h15v14H2zM2 7l4-5h15v14l-4 5M17 7l4-5" stroke={D} /><text x="3.5" y="18" fontSize="8" fill={B} stroke="none" fontWeight="700" fontFamily="Noto Sans">3D</text></>,
    cube: <><path d="M2 7h15v14H2z" stroke={D} /><path d="M2 7l4-5h15v14l-4 5M17 7l4-5" stroke={B} /></>,
    cubeF: <path d="M2 7h15v14H2zM2 7l4-5h15v14l-4 5M17 7l4-5" stroke={B} fill="#cfe2fa" />,
    full: <path d="M1 7V3a2 2 0 0 1 2-2h4M15 1h4a2 2 0 0 1 2 2v4M21 15v4a2 2 0 0 1-2 2h-4M7 21H3a2 2 0 0 1-2-2v-4" stroke={D} strokeWidth="1.4" />,
    docEye: <><path d="M2 2h17v9M13 21H2V2" stroke={D} /><path d="M5 7h2M9 7h7M5 11h2M9 11h5M5 15h2" stroke={D} /><ellipse cx="17" cy="17" rx="5" ry="3" stroke={B} /><circle cx="17" cy="17" r="1.3" fill={B} /></>,
  };
  return <IconStroke width="22" height="22" viewBox="0 0 22 22">{m[k]}</IconStroke>;
};

const CheckMark = () => (
  <IconStroke width="10" height="10" viewBox="0 0 10 10"><path d="M1 5.5l2.800 2.500L9 2" stroke="#fff" strokeWidth="1.8" /></IconStroke>
);

const Tile = ({ k }: { k: string }) => {
  if (k === 'g') return (
    <svg width="32" height="34" viewBox="0 0 32 34"><path fill="#2f9ff5" d="M27 2C15-2 3 6 3 18c0 9 7 15 14 15 7 0 12-5 12-11 0-5-4-8-9-8h-7l4 6h3c2 0 3 1 3 3 0 2-3 4-6 4-5 0-7-4-7-9C10 11 17 6 25 9l5-5z" /></svg>
  );
  if (k === 't') return (
    <svg width="33" height="33" viewBox="0 0 33 33"><rect width="33" height="33" rx="6" fill="#2f7df0" /><path fill="#fff" d="M7 13L25 5l2 7-6 3v14h-7V17l-6 3z" /></svg>
  );
  if (k === 'e') return (
    <svg width="32" height="34" viewBox="0 0 32 34">
      <circle cx="15" cy="19" r="14" fill="#6cc03a" />
      <path d="M7 19h16" stroke="#fff" strokeWidth="3.5" />
      <path d="M22 12A9.500 9.500 0 0 0 7 14M7 24a9.500 9.500 0 0 0 15 3" fill="none" stroke="#fff" strokeWidth="3" />
      <path d="M6 8C14 1 25 0 31 2" fill="none" stroke="#b8e040" strokeWidth="2.500" />
    </svg>
  );
  return <LogoGlyph w={20} h={26} />;
};

const WinOrb = () => (
  <svg width="36" height="36" viewBox="0 0 36 36">
    <defs><radialGradient id="orb" cx=".5" cy=".35" r=".7"><stop offset="0" stopColor="#9fc6dc" /><stop offset=".6" stopColor="#4d7ea3" /><stop offset="1" stopColor="#1e3f5e" /></radialGradient></defs>
    <circle cx="18" cy="18" r="17.5" fill="url(#orb)" stroke="#1c3348" />
    <path d="M9 11c3-1.500 5-1.500 8 0v6c-3-1.500-5-1.500-8 0z" fill="#f0562c" />
    <path d="M18 11c3 1.500 5 1.500 8 0v6c-3 1.500-5 1.500-8 0z" fill="#8cc63f" />
    <path d="M9 18c3-1.500 5-1.500 8 0v6c-3-1.500-5-1.500-8 0z" fill="#3a9bdc" />
    <path d="M18 18c3 1.500 5 1.500 8 0v6c-3 1.500-5 1.500-8 0z" fill="#ffc20e" />
  </svg>
);

const TrayIcon = ({ k }: { k: string }) => {
  const m: Record<string, React.ReactNode> = {
    kb: <><rect x="2" y="7" width="16" height="10" rx="2" fill="#c8ccd0" stroke="#555" /><path d="M4 10h12M4 12.5h12M6 15h8" stroke="#666" strokeDasharray="1 1" /><path d="M10 7C10 4 13 5 16 3" fill="none" stroke="#ccc" /></>,
    help: <><circle cx="10" cy="10" r="8.5" fill="#12208c" stroke="#b8c4d8" strokeWidth="1.5" /><text x="10" y="14.5" textAnchor="middle" fontSize="13" fontWeight="700" fill="#fff" fontFamily="Liberation Sans">?</text></>,
    g: <path fill="#38a8fa" d="M16 2C8 0 2 5 2 11c0 5 4 8 8 8s8-3 8-7h-8l2 3h2c-1 2-3 2-4 2-3 0-6-3-6-6 0-4 5-7 10-6l3-2z" />,
    e: <><circle cx="10" cy="10" r="8.5" fill="#55b830" /><circle cx="10" cy="10" r="6" fill="#e8f6d8" /><path d="M4 10h12" stroke="#55b830" strokeWidth="3" /></>,
    cl: <><rect x="1" y="1" width="18" height="18" rx="3" fill="#f5a20e" /><path d="M5 13a3 3 0 0 1 1-6c2 0 3 2 4 3s2 3 4 3a3 3 0 0 0 0-6" fill="none" stroke="#fff" strokeWidth="2" /></>,
    sh: <><rect x="1" y="1" width="18" height="18" rx="2" fill="#fff" /><path d="M10 3l7 6h-4L10 6 7 9l2 2H5L3 9z" fill="#1a7ae0" /><path d="M3 12h14v5H3z" fill="#ef8a2c" /></>,
    usb: <><rect x="6" y="1" width="7" height="7" fill="#aaa" stroke="#555" /><rect x="4" y="8" width="11" height="10" fill="#777" /><circle cx="14" cy="14" r="5" fill="#1f8a2c" /><path d="M11.5 14l2 2 3-4" fill="none" stroke="#fff" strokeWidth="1.3" /></>,
    plus: <><circle cx="10" cy="10" r="9" fill="#f4d000" stroke="#3c9a2c" strokeWidth="2" /><path d="M10 5v10M5 10h10" stroke="#126a1c" strokeWidth="3" /></>,
    spk: <><path d="M2 7h4l6-5v16l-6-5H2z" fill="#e9825c" stroke="#7a2a10" /><path d="M14 6a6 6 0 0 1 0 8M16 4a9 9 0 0 1 0 12" fill="none" stroke="#555" /></>,
    sig: <path fill="#fff" d="M2 15h2v2H2zM5.5 13h2v4h-2zM9 10.5h2V17H9zM12.5 7.5h2V17h-2zM16 4h2v13h-2z" />,
    vol: <><path d="M2 7h4l5-4v14l-5-4H2z" fill="#fff" /><path d="M13 7a4 4 0 0 1 0 6M15 5a7 7 0 0 1 0 10" fill="none" stroke="#fff" /></>,
  };
  return <svg width="20" height="20" viewBox="0 0 20 20">{m[k]}</svg>;
};

const Shirt = () => (
  <IconStroke width="15" height="15" viewBox="0 0 15 15"><path d="M5 1L1 3l1 4 2-1v8h7V6l2 1 1-4-4-2c-1 2-4 2-5 0z" stroke="#555" /></IconStroke>
);
const Chevron = () => (
  <IconStroke width="14" height="10" viewBox="0 0 14 10"><path d="M1 9l6-7 6 7" stroke="#555" /></IconStroke>
);
const Restore = () => (
  <IconStroke width="11" height="11" viewBox="0 0 11 11"><path d="M1 3.5h6.500V10H1zM3.5 3.500V1H10v6.500H7.500" stroke="#555" /></IconStroke>
);
const SmallWin = () => (
  <IconStroke width="12" height="10" viewBox="0 0 12 10"><path d="M3.5 1H11v5H8M1 3.5h7v5H1z" stroke="#fff" /></IconStroke>
);

/* ---------- data ---------- */
const NAV_ITEMS: [string, string][] = [
  ['portal', '门式刚架'], ['col', '钢柱(Z)'], ['beam', '钢梁(L)'], ['crane', '吊车梁(P)'], ['top', '上弦/外弦(W)'], ['bot', '下弦/内弦(E)'],
  ['web', '腹杆(F)'], ['diag', '斜腹杆(X)'], ['ring', '环梁'], ['arch', '主拱(P)'], ['bolt', '螺栓球(Q)'], ['weld', '焊接球(Q)'],
];
type Prop = { n: string; k: string; v?: string; blue?: boolean; dim?: boolean; box?: '+' | '-'; sub?: boolean };
const PROPS: Prop[] = [
  { n: '1', k: '名称', v: 'GL-1', blue: true }, { n: '2', k: '规格', v: 'HM340*250*9*14' }, { n: '3', k: '结构类别', v: '钢梁', blue: true, dim: true },
  { n: '4', k: '清单类型', v: '钢梁' }, { n: '5', k: '归属' }, { n: '6', k: '材质', v: 'Q235B' }, { n: '7', k: '除锈防腐', box: '+' },
  { n: '12', k: '防火涂料', box: '+' }, { n: '15', k: '标高属性', box: '-' }, { n: '16', k: '起点...', v: '5.825+3.000(8.825)', sub: true },
  { n: '17', k: '终点...', v: '5.825+3.000(8.825)', sub: true }, { n: '18', k: '显示样式', box: '+' }, { n: '21', k: '计算设置', v: '按默认计算规则' },
  { n: '22', k: '定额子目' }, { n: '23', k: '备注' },
];
type L = [string, 0 | 1 | 2, boolean?];
const LAYERS: L[] = [
  ['所有构件', 0], ['轴线', 1, true], ['轴网', 2, true], ['辅助轴线', 2, true], ['主构件', 1], ['门式刚架', 2], ['钢柱', 2], ['钢梁', 2], ['吊车梁', 2],
  ['上弦/外弦', 2], ['下弦/内弦', 2], ['腹杆', 2], ['斜腹杆', 2], ['环梁', 2], ['主拱', 2], ['螺栓球', 2], ['焊接球', 2], ['次构件', 1], ['系杆', 2], ['檩条', 2],
  ['隅撑', 2], ['拉条', 2], ['天沟', 2], ['支撑', 2], ['栏杆', 2], ['门框', 2], ['窗框', 2], ['撑杆', 2], ['组合构件', 1, true], ['格构柱', 2, true], ['巨型柱', 2, true],
  ['钢板剪力墙', 2, true], ['钢平台', 2, true], ['电梯井', 2, true],
];

const CloseX = () => <Icon n="x" s={9} c="#9a9a9a" />;

export default function App() {
  return (
    <Page>
      <Global />
      <Header>
        <LogoCol><LogoGlyph /><LogoMark /></LogoCol>
        <HeaderMain>
          <TitleRow>
            <Quick>
              <QuickBtn $w={26}><Icon n="upload" /></QuickBtn>
              <QuickBtn $w={26}><Icon n="newDoc" /></QuickBtn>
              <QuickBtn $w={27}><Icon n="open" /></QuickBtn>
              <QuickBtn $w={25}><Icon n="save" /></QuickBtn>
              <QuickBtn $w={36}><Icon n="undo" /><Caret $ml={4} /></QuickBtn>
              <QuickBtn $w={34}><Icon n="redo" /><Caret $ml={4} /></QuickBtn>
              <QuickBtn $w={24}><Icon n="gridEye" s={17} /></QuickBtn>
              <QuickBtn $w={10}><MoreMark /></QuickBtn>
            </Quick>
            <Title>广联达BIM钢结构计量GJG2021 - [C:\Users\Administrator\Desktop\图形文件\钢结构工程\冷凝泵房工程-2021-11-22-15-23-10.GJG.BAK.GJG]</Title>
          </TitleRow>
          <TabRow>
            <Tab>开始</Tab><Tab>工程设置</Tab><Tab $on>建模</Tab><Tab>工程量</Tab><Tab>视图</Tab><Tab>工具</Tab><Tab>协作</Tab>
            <HeadRight>
              <SearchBox><span>请输入功能名称或问题描述</span><Icon n="search" s={11} c="#aaa" /></SearchBox>
              <Avatar><AvatarHead /></Avatar>
              <UserName>杨华</UserName>
              <HelpMark>?</HelpMark><Caret $ml={1} />
              <HeadIcon $ml={7}><Shirt /></HeadIcon>
              <HeadIcon $ml={9} $mr={6}><Chevron /></HeadIcon>
            </HeadRight>
          </TabRow>
        </HeaderMain>
        <WinCtl>
          <WinBtn $w={36}><MinBar /></WinBtn>
          <WinBtn $w={34}><Restore /></WinBtn>
          <WinBtn $w={37}><Icon n="x" s={10} c="#555" /></WinBtn>
        </WinCtl>
        <Banner>广小二搬家啦，立即体验智能+人工在线客服</Banner>
      </Header>

      <Ribbon>
        <Group $w={134}>
          <GroupBody $pl={2}>
            <Big $w={50}><BigIcon><BigSelect /></BigIcon><BigText>选择</BigText></Big>
            <Col>
              <Item i="batch" t="批量选择" off />
              <Item i="pick" t="拾取构件" />
              <Item i="docFind" t="查找图元" />
            </Col>
          </GroupBody>
          <GroupLabel>选择<Caret /></GroupLabel>
        </Group>
        <Group $w={246}>
          <GroupBody $pl={6}>
            <Big $w={54}><BigIcon><BigAdd /></BigIcon><BigText>添加图纸</BigText><Caret $ml={0} /></Big>
            <Col $w={79}>
              <Item i="scale" t="设置比例" off />
              <Item i="swap" t="查找替换" off />
              <Item i="restore" t="还原CAD" off />
            </Col>
            <Col>
              <Item i="tblDots" t="识别楼层表" off />
              <Item i="tblDots" t="识别构件表" off />
              <Item i="cad" t="CAD识别选项" />
            </Col>
          </GroupBody>
          <GroupLabel>图纸操作<Caret /></GroupLabel>
        </Group>
        <Group $w={312}>
          <GroupBody $pl={8}>
            <Col $w={86}>
              <Item i="define" t="定义" />
              <Item i="twoPt" t="两点辅轴" caret />
              <Item i="dim" t="长度标注" caret />
            </Col>
            <Col $w={103}>
              <Item i="floor" t="层间复制图元" />
              <Item i="elemSave" t="图元存盘" caret />
              <Item i="auxLine" t="创建辅助线" />
            </Col>
            <Col>
              <Item i="flush" t="平齐到面" off caret />
              <Item i="owner" t="创建归属" caret />
              <Item i="combo" t="创建组合构件" caret />
            </Col>
          </GroupBody>
          <GroupLabel>通用操作</GroupLabel>
        </Group>
        <Group $w={154}>
          <GroupBody $pl={8}>
            <Col $w={55}>
              <Row $gap={6}><Icon n="trash" /><Icon n="rotate" /></Row>
              <Row $gap={6}><Icon n="copyB" /><Icon n="mirror" /></Row>
              <Row $gap={6}><Icon n="move" /><Icon n="trim" /><Caret $ml={-5} /></Row>
            </Col>
            <Col>
              <Item i="cut" t="零件切割" caret />
              <Item i="align" t="线对齐" />
              <Item i="ring" t="环形阵列" caret />
            </Col>
          </GroupBody>
          <GroupLabel>修改<Caret /></GroupLabel>
        </Group>
        <Group $w={67}>
          <GroupBody $pl={8}>
            <Col>
              <Row $gap={6}><Icon n="point" off /><Icon n="circ" /><Caret $ml={-5} /></Row>
              <Row $gap={6}><Icon n="line" /><Icon n="arc" /><Caret $ml={-5} /></Row>
              <Row $gap={6}><Icon n="rect" /></Row>
            </Col>
          </GroupBody>
          <GroupLabel>绘制</GroupLabel>
        </Group>
        <Group $w={160}>
          <GroupBody $pl={3}>
            <Big $w={63} $off><BigIcon><BigBeam /></BigIcon><BigText>识别钢梁</BigText></Big>
            <Col>
              <Item i="coord" t="坐标点识别" off />
              <Item i="lineRec" t="选线识别" off />
              <Item i="batchRec" t="批量识别" off />
            </Col>
          </GroupBody>
          <GroupLabel>识别钢梁</GroupLabel>
        </Group>
        <Group $w={265}>
          <GroupBody $pl={7}>
            <Big $w={54}><BigIcon><BigNode /></BigIcon><BigText>生成节点</BigText></Big>
            <Big $w={57}><BigIcon><BigDetail /></BigIcon><BigText>生成细部</BigText><Caret $ml={0} /></Big>
            <Col>
              <Item i="editNode" t="编辑节点细部/参数化" />
              <Item i="explode" t="炸开节点细部/自定义" />
              <Item i="editNode" t="创建自定义节点" caret />
            </Col>
          </GroupBody>
          <GroupLabel>节点、细部、参数化</GroupLabel>
        </Group>
      </Ribbon>

      <OptionBar>
        <Select $w={98} $on><span>基础层</span><Caret /></Select>
        <Select $w={99}><span>主构件</span><Caret /></Select>
        <Select $w={99}><span>钢梁</span><Caret /></Select>
        <Select $w={99}><span>GL-1</span><Caret /></Select>
        <Select $w={58}><span>不偏移</span><Caret /></Select>
        <SpinGroup>
          <OptLabel $dim $w={17}>X=</OptLabel>
          <Spin><span>0</span><SpinArrows><ArrowUp /><ArrowDown /></SpinArrows></Spin>
          <OptLabel $w={24}>mm</OptLabel>
          <OptLabel $dim $w={17}>Y=</OptLabel>
          <Spin><span>0</span><SpinArrows><ArrowUp /><ArrowDown /></SpinArrows></Spin>
          <OptLabel $w={24}>mm</OptLabel>
        </SpinGroup>
      </OptionBar>

      <Main>
        <Panel $w={197}>
          <Grip><CloseX /></Grip>
          <PanelHead>导航栏</PanelHead>
          <NavTools>
            <NavTool><Icon n="sparkle" s={13} /></NavTool>
            <NavTool><Icon n="gridGear" /></NavTool>
            <NavTool $on><Icon n="listDots" /></NavTool>
            <NavTool $on><Icon n="form" /></NavTool>
          </NavTools>
          <NavList>
            <NavSection>轴线</NavSection>
            <NavSection>主构件</NavSection>
            {NAV_ITEMS.map(([k, t]) => (
              <NavItem key={t} $on={t === '钢梁(L)'}><Nav k={k} /><span>{t}</span></NavItem>
            ))}
            <NavSection>次构件</NavSection>
            <NavSection>组合构件</NavSection>
            <NavSection>配件</NavSection>
            <NavSection>面板</NavSection>
            <NavSection>其它</NavSection>
          </NavList>
        </Panel>

        <Middle>
          <Panel $h={426}>
            <Grip><CloseX /></Grip>
            <Tabs $h={24}>
              <FlatTab $on $w={64}>构件列表</FlatTab>
              <FlatTab $w={66}>图纸列表</FlatTab>
            </Tabs>
            <CompTools>
              <CompBtn $mr={6}><Icon n="newDoc" /><span>新建</span></CompBtn>
              <Caret $ml={0} $d="#aaa" />
              <CompBtn $ml={6}><Icon n="copySm" /><span>复制</span></CompBtn>
              <CompBtn $mr={0}><Icon n="trash" s={14} /><span>删除</span></CompBtn>
              <MoreBtn><MiniTri /><MiniTri /></MoreBtn>
            </CompTools>
            <CompSearch><span>搜索构件...</span><Icon n="search" s={11} c="#aaa" /></CompSearch>
            <TreeRoot><Caret $ml={0} />钢梁</TreeRoot>
            <TreeLeaf><LeafPill $on>GL-1  &lt;44&gt;</LeafPill></TreeLeaf>
            <TreeLeaf><LeafPill>GL-2  &lt;11&gt;</LeafPill></TreeLeaf>
            <TreeLeaf><LeafPill>GL-3  &lt;18&gt;</LeafPill></TreeLeaf>
            <TreeLeaf><LeafPill>GL-4  &lt;17&gt;</LeafPill></TreeLeaf>
          </Panel>
          <Panel>
            <Grip><CloseX /></Grip>
            <Tabs $bg="#fafafa">
              <FlatTab $on $w={41}>属性</FlatTab>
              <FlatTab $w={65}>位置控点</FlatTab>
              <FlatTab $w={65}>图层管理</FlatTab>
            </Tabs>
            <PropGrid>
              <PropRow>
                <PropCell /><PropCell $center>属性名称</PropCell><PropCell $center>属性值</PropCell>
              </PropRow>
              {PROPS.map(p => (
                <PropRow key={p.n}>
                  <NumCell>{p.n}</NumCell>
                  <PropCell $c={p.blue ? '#2a5fd6' : undefined} $pl={p.sub ? 31 : 3} $tree={p.sub}>
                    {p.box && <Box>{p.box}</Box>}{p.k}
                  </PropCell>
                  <PropCell $c={p.dim ? '#a8a8a8' : undefined}>{p.v}</PropCell>
                </PropRow>
              ))}
            </PropGrid>
          </Panel>
        </Middle>

        <CanvasWrap>
          <Scene />
          <Prompt>
            <IconStroke width="14" height="14" viewBox="0 0 14 14"><path d="M8 1v5h5M8 6l5-5M6 13V8H1M6 8l-5 5" stroke="#fff" /></IconStroke>
            <span>按鼠标左键选择打断点，支持多选，按右键确认选择</span>
          </Prompt>
          <ViewTools>
            <ViewBtn><ViewIcon k="orbit" /></ViewBtn>
            <ViewBtn><ViewIcon k="d3" /></ViewBtn>
            <ViewBtn><ViewIcon k="cube" /></ViewBtn>
            <ViewCaret><Caret $ml={0} $d="#555" /></ViewCaret>
            <ViewBtn><ViewIcon k="cubeF" /></ViewBtn>
            <ViewCaret><Caret $ml={0} $d="#555" /></ViewCaret>
            <ViewBtn><ViewIcon k="full" /></ViewBtn>
            <ViewRule />
            <ViewBtn><ViewIcon k="docEye" /></ViewBtn>
          </ViewTools>
          <CursorHint>
            <HintText>按鼠标左键选择打断点，支持多选，按右键确认选择</HintText>
            <Coords>
              <XInput><XSel>43797.218</XSel></XInput>
              <YInput>Y:599952.945</YInput>
            </Coords>
          </CursorHint>
        </CanvasWrap>

        <Sash $l={440} />
        <Sash $l={1622} />

        <Panel $w={293} $ml={4}>
          <Grip><CloseX /></Grip>
          <PanelHead>显示设置</PanelHead>
          <DispTabs>
            <DispTab $on>图元显示</DispTab>
            <DispTab>楼层显示</DispTab>
          </DispTabs>
          <DispBody>
            <DispGrid>
              <DispRow>
                <DispCell $center>图层构件</DispCell><DispCell $center>显示图元</DispCell><DispCell $center>显示名称</DispCell>
              </DispRow>
              {LAYERS.map(([t, lv, dis]) => (
                <DispRow key={t}>
                  <TreeCell $lv={lv}>{lv < 2 && <Box>-</Box>}{t}</TreeCell>
                  <DispCell $center><Check $st="on"><CheckMark /></Check></DispCell>
                  <DispCell $center><Check $st={dis ? 'dis' : 'off'} /></DispCell>
                </DispRow>
              ))}
              <DispRow $h={3}><TreeCell $lv={2} /><DispCell /><DispCell /></DispRow>
            </DispGrid>
            <ScrollTrack><ScrollThumb /></ScrollTrack>
          </DispBody>
          <DispFoot><ResetBtn>恢复默认设置</ResetBtn></DispFoot>
        </Panel>
      </Main>

      <StatusBar>
        <Stat $w={90}>层高 : 2.000</Stat>
        <Stat $w={110}>底标高 : -2.000</Stat>
        <Stat $w={110}>选中图元 : 1(44)</Stat>
        <Stat $w={110}>隐藏图元 : 0</Stat>
        <StatTools>
          <StatBtn><Icon n="ell" s={14} /></StatBtn>
          <StatBtn $w={35} $on><Icon n="rectSt" s={14} /><Caret $ml={3} /></StatBtn>
          <StatBtn $w={35} $on><Icon n="cubeSt" s={14} /><Caret $ml={3} /></StatBtn>
          <StatBtn><Icon n="xSt" s={14} /></StatBtn>
          <StatBtn $w={35}><Icon n="clock" s={14} /><Caret $ml={3} /></StatBtn>
          <StatBtn $w={35}><Icon n="angle" s={14} /><Caret $ml={3} /></StatBtn>
          <StatBtn $w={35} $on><Icon n="plusBar" s={14} /><Caret $ml={3} /></StatBtn>
          <StatBtn><Icon n="frame" s={14} /></StatBtn>
          <StatBtn><Icon n="barSt" s={14} /></StatBtn>
          <StatBtn><Icon n="elbow" s={14} /></StatBtn>
          <StatSelect><span>无工作平面</span><Caret /></StatSelect>
        </StatTools>
      </StatusBar>

      <Taskbar>
        <Orb><WinOrb /></Orb>
        <DotGrip />
        <TaskBtn><Tile k="g" /></TaskBtn>
        <TaskBtn><Tile k="t" /></TaskBtn>
        <TaskBtn><PreTile>预</PreTile></TaskBtn>
        <TaskBtn><Tile k="e" /></TaskBtn>
        <TaskBtn $on><Tile k="i" /></TaskBtn>
        <Tray>
          <TrayGrip />
          <TrayCell $w={21}><TrayIcon k="kb" /></TrayCell>
          <TrayCell $w={23}><TrayIcon k="help" /></TrayCell>
          <TrayCell $w={21}><SmallWin /><SmallDown /></TrayCell>
          <TrayCell $w={24}><TrayIcon k="g" /></TrayCell>
          <TrayCell $w={24}><TrayIcon k="e" /></TrayCell>
          <TrayCell $w={24}><TrayIcon k="cl" /></TrayCell>
          <TrayCell $w={24}><TrayIcon k="sh" /></TrayCell>
          <TrayCell $w={24}><TrayIcon k="usb" /></TrayCell>
          <TrayCell $w={24}><TrayIcon k="plus" /></TrayCell>
          <TrayCell $w={24}><TrayIcon k="spk" /></TrayCell>
          <TrayCell $w={24}><TrayIcon k="sig" /></TrayCell>
          <TrayCell $w={23}><TrayIcon k="vol" /></TrayCell>
          <Clock>10:35 周五<Badge>1</Badge><br />2024/4/12</Clock>
          <FlagBtn><DeskArrow /></FlagBtn>
          <ShowDesk />
        </Tray>
      </Taskbar>
    </Page>
  );
}
